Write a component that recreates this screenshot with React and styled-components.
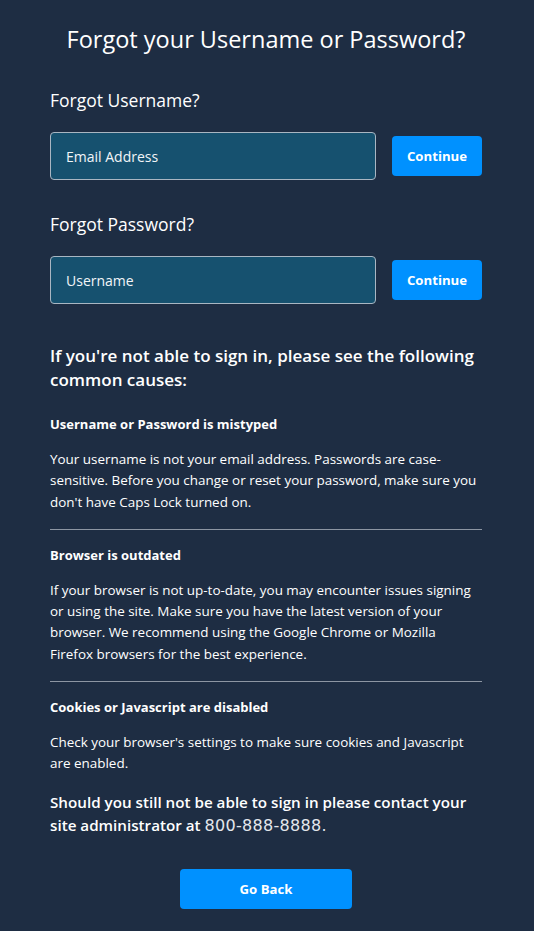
import React from 'react';
import styled, { createGlobalStyle } from 'styled-components';

const GlobalStyle = createGlobalStyle`
  html, body {
    margin: 0;
    padding: 0;
    background: #1e2d43;
  }
  body {
    font-family: "Open Sans", "Noto Sans", sans-serif;
    color: #ffffff;
  }
`;

const Page = styled.div`
  min-height: 931px;
  background: #1e2d43;
  box-sizing: border-box;
  padding: 22px 52px 20px 50px;
`;

const Title = styled.h1`
  margin: 0;
  text-align: center;
  font-size: 23.5px;
  font-weight: 500;
  line-height: 34px;
`;

const SectionTitle = styled.h2`
  margin: ${(p) => p.$top || 0}px 0 0;
  font-size: 17.5px;
  font-weight: 500;
  line-height: 24px;
`;

const FieldRow = styled.div`
  display: flex;
  align-items: center;
  gap: 16px;
  margin-top: 20px;
`;

const Input = styled.input`
  flex: 1;
  min-width: 0;
  height: 48px;
  box-sizing: border-box;
  padding: 0 15px;
  background: #16516f;
  border: 1px solid #a9b6c2;
  border-radius: 4px;
  color: #fff;
  font-family: inherit;
  font-size: 14px;
  outline: none;

  &::placeholder {
    color: #f2f5f8;
    opacity: 1;
  }
`;

const Button = styled.button`
  width: ${(p) => p.$width || 90}px;
  height: 40px;
  border: none;
  border-radius: 4px;
  background: #0091ff;
  color: #fff;
  font-family: inherit;
  font-size: 13.2px;
  font-weight: 700;
  cursor: pointer;
`;

const CausesTitle = styled.h3`
  margin: 40px 0 0;
  font-size: 17px;
  font-weight: 600;
  line-height: 24px;
`;

const Cause = styled.div`
  padding: ${(p) => (p.$first ? '22px' : '15px')} 0 ${(p) => (p.$last ? '0' : '16px')};
  border-bottom: ${(p) => (p.$last ? 'none' : '1px solid #8d96a3')};
`;

const CauseTitle = styled.h4`
  margin: 0;
  font-size: 13px;
  font-weight: 700;
  line-height: 20px;
`;

const CauseText = styled.p`
  margin: 15px 0 0;
  font-size: 13.45px;
  line-height: 21.3px;
`;

const Contact = styled.p`
  margin: 16px 0 0;
  font-size: 15.2px;
  font-weight: 600;
  line-height: 23px;
`;

const Phone = styled.span`
  margin-left: 4px;
  font-family: "DejaVu Sans", Verdana, sans-serif;
  font-weight: 400;
  font-size: 16px;
  line-height: 1;
  letter-spacing: 0.3px;
  color: #e4e7ec;
`;

const Footer = styled.div`
  display: flex;
  justify-content: center;
  margin-top: 32px;
`;

const causes = [
  {
    title: 'Username or Password is mistyped',
    text: "Your username is not your email address. Passwords are case-sensitive. Before you change or reset your password, make sure you don't have Caps Lock turned on.",
  },
  {
    title: 'Browser is outdated',
    text: 'If your browser is not up-to-date, you may encounter issues signing or using the site. Make sure you have the latest version of your browser. We recommend using the Google Chrome or Mozilla Firefox browsers for the best experience.',
  },
  {
    title: 'Cookies or Javascript are disabled',
    text: "Check your browser's settings to make sure cookies and Javascript are enabled.",
  },
];

export default function App() {
  return (
    <>
      <GlobalStyle />
      <Page>
        <Title>Forgot your Username or Password?</Title>

        <SectionTitle $top={32}>Forgot Username?</SectionTitle>
        <FieldRow>
          <Input placeholder="Email Address" />
          <Button>Continue</Button>
        </FieldRow>

        <SectionTitle $top={32}>Forgot Password?</SectionTitle>
        <FieldRow>
          <Input placeholder="Username" />
          <Button>Continue</Button>
        </FieldRow>

        <CausesTitle>If you're not able to sign in, please see the following common causes:</CausesTitle>

        {causes.map((c, i) => (
          <Cause key={c.title} $first={i === 0} $last={i === causes.length - 1}>
            <CauseTitle>{c.title}</CauseTitle>
            <CauseText>{c.text}</CauseText>
          </Cause>
        ))}

        <Contact>
          Should you still not be able to sign in please contact your site administrator at
          <Phone>800-888-8888.</Phone>
        </Contact>

        <Footer>
          <Button $width={172}>Go Back</Button>
        </Footer>
      </Page>
    </>
  );
}
